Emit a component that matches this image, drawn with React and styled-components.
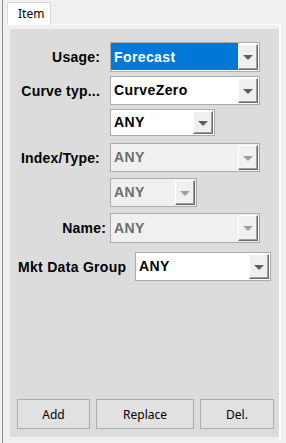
import React from "react";
import styled, { createGlobalStyle } from "styled-components";

const Global = createGlobalStyle`
  html, body {
    margin: 0;
    padding: 0;
    background: #f0f0f0;
  }
  body {
    width: 286px;
    height: 443px;
    overflow: hidden;
  }
`;

const rows = [
  { label: "Usage:", value: "Forecast", w: 150, h: 30, mt: 0, selected: true },
  { label: "Curve typ...", value: "CurveZero", w: 150, h: 29, mt: 4 },
  { label: "", value: "ANY", w: 105, h: 27, mt: 4 },
  { label: "Index/Type:", value: "ANY", w: 150, h: 29, mt: 7, disabled: true },
  { label: "", value: "ANY", w: 87, h: 29, mt: 6, disabled: true },
  { label: "Name:", value: "ANY", w: 150, h: 30, mt: 6, disabled: true, near: true },
];

const App = () => {
  return (
    <Window>
      <Global />
      <LeftRule />
      <TabArea>
        <TabStrip>
          <Tab>Item</Tab>
        </TabStrip>
        <TabFrame>
          <Panel>
            <Form>
              {rows.map((r, i) => (
                <Row key={i} $mt={r.mt}>
                  <Label $near={r.near}>{r.label}</Label>
                  <Combo
                    value={r.value}
                    width={r.w}
                    height={r.h}
                    selected={r.selected}
                    disabled={r.disabled}
                  />
                </Row>
              ))}
              <WideRow>
                <WideLabel>Mkt Data Group</WideLabel>
                <Combo value="ANY" width={136} height={29} />
              </WideRow>
            </Form>
            <Buttons>
              <Button $w={73}>Add</Button>
              <Button $w={98}>Replace</Button>
              <Button $w={74}>Del.</Button>
            </Buttons>
          </Panel>
        </TabFrame>
      </TabArea>
    </Window>
  );
};

const Combo = ({ value, width, height, selected, disabled }) => (
  <Field $w={width} $h={height} $disabled={disabled}>
    <Value $selected={selected} $disabled={disabled}>
      {value}
    </Value>
    <DropButton>
      <Arrow $disabled={disabled} />
    </DropButton>
  </Field>
);

export default App;

const Window = styled.div`
  display: flex;
  width: 286px;
  height: 443px;
`;

const LeftRule = styled.div`
  width: 2px;
  border-right: 1px solid #8c8c8c;
  flex-shrink: 0;
`;

const TabArea = styled.div`
  display: flex;
  flex-direction: column;
  padding-left: 3px;
`;

const TabStrip = styled.div`
  display: flex;
  height: 24px;
  padding-top: 2px;
  box-sizing: border-box;
  padding-left: 1px;
`;

const Tab = styled.div`
  width: 44px;
  height: 23px;
  box-sizing: border-box;
  background: #fff;
  border: 1px solid #d9d9d9;
  border-bottom: none;
  font-family: "Noto Sans", "Open Sans", sans-serif;
  font-size: 12px;
  color: #000;
  padding-left: 10px;
  padding-top: 3px;
  line-height: 15px;
  position: relative;
  z-index: 1;
`;

const TabFrame = styled.div`
  width: 275px;
  height: 416px;
  box-sizing: border-box;
  border-top: 1px solid #fff;
  border-right: 2px solid #fff;
  padding: 4px 0 3px 4px;
  display: flex;
`;

const Panel = styled.div`
  flex: 1;
  background: #dcdcdc;
  display: flex;
  flex-direction: column;
  justify-content: space-between;
  padding: 13px 5px 8px 0;
`;

const Form = styled.div`
  display: flex;
  flex-direction: column;
`;

const Row = styled.div`
  display: flex;
  align-items: center;
  margin-top: ${(p) => p.$mt}px;
`;

const Label = styled.div`
  width: 90px;
  margin-right: 10px;
  text-align: right;
  font-family: "Liberation Sans", Arial, sans-serif;
  font-weight: bold;
  font-size: 14px;
  letter-spacing: 0.2px;
  color: #000;
  white-space: nowrap;
  position: relative;
  left: ${(p) => (p.$near ? 6 : 0)}px;
`;

const WideRow = styled.div`
  display: flex;
  align-items: center;
  margin-top: 9px;
  padding-left: 8px;
`;

const WideLabel = styled.div`
  font-family: "Liberation Sans", Arial, sans-serif;
  font-weight: bold;
  font-size: 14px;
  letter-spacing: 0.3px;
  color: #000;
  width: 110px;
  margin-right: 7px;
  white-space: nowrap;
`;

const Field = styled.div`
  width: ${(p) => p.$w}px;
  height: ${(p) => p.$h}px;
  box-sizing: border-box;
  border: 1px solid #acacac;
  background: ${(p) => (p.$disabled ? "#f0f0f0" : "#fff")};
  display: flex;
  padding: 0 1px 1px 0;
`;

const Value = styled.div`
  flex: 1;
  display: flex;
  align-items: center;
  padding-left: 3px;
  font-family: "Liberation Sans", Arial, sans-serif;
  font-weight: bold;
  font-size: 14px;
  letter-spacing: 0.4px;
  background: ${(p) => (p.$selected ? "#0078d7" : "transparent")};
  color: ${(p) => (p.$selected ? "#fff" : p.$disabled ? "#6d6d6d" : "#000")};
`;

const DropButton = styled.div`
  width: 20px;
  margin-top: 1px;
  box-sizing: border-box;
  background: #f0f0f0;
  border-top: 1px solid #fff;
  border-left: 1px solid #fff;
  border-right: 1px solid #696969;
  border-bottom: 1px solid #696969;
  box-shadow: inset -1px -1px 0 #a0a0a0;
  display: flex;
  align-items: center;
  justify-content: center;
`;

const Arrow = styled.div`
  width: 0;
  height: 0;
  border-left: 5px solid transparent;
  border-right: 5px solid transparent;
  border-top: 5px solid ${(p) => (p.$disabled ? "#a0a0a0" : "#606060")};
  margin-top: 1px;
`;

const Buttons = styled.div`
  display: flex;
  gap: 6px;
  padding-left: 7px;
`;

const Button = styled.button`
  width: ${(p) => p.$w}px;
  height: 30px;
  box-sizing: border-box;
  background: #e1e1e1;
  border: 1px solid #adadad;
  border-radius: 0;
  font-family: "Noto Sans", "Open Sans", sans-serif;
  font-size: 12px;
  color: #000;
  padding: 0;
  cursor: pointer;
`;
